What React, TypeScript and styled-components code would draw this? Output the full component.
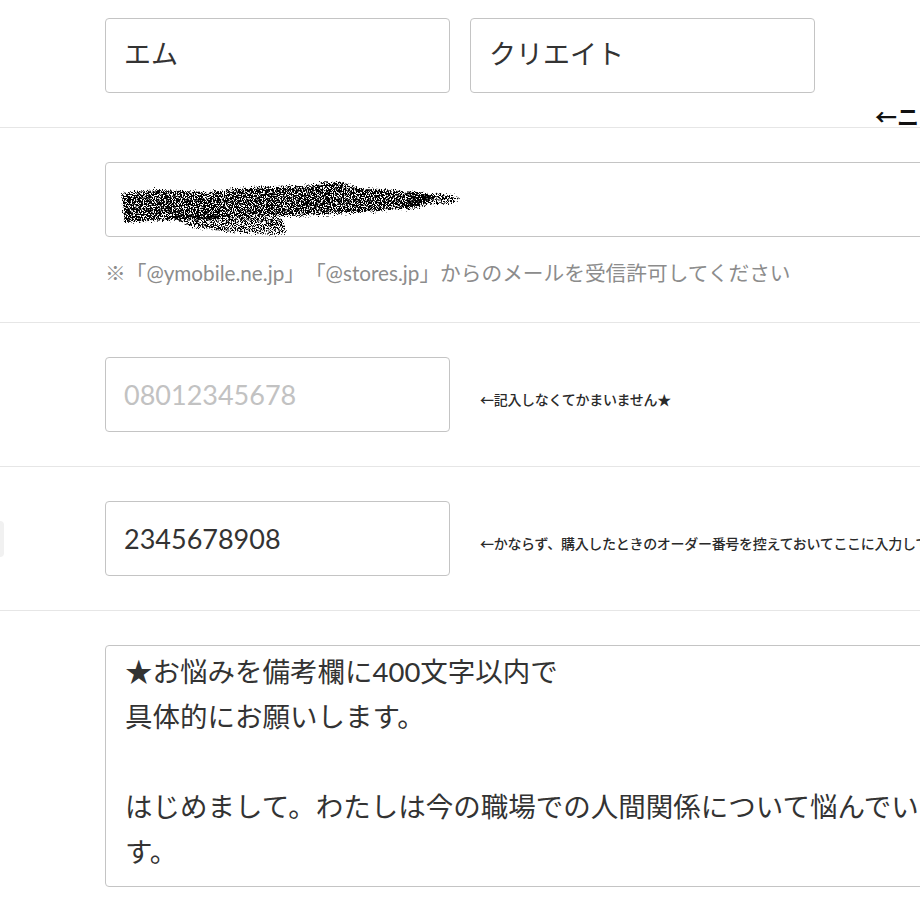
import styled, { createGlobalStyle } from "styled-components";

const GlobalStyle = createGlobalStyle`
  html, body {
    margin: 0;
    padding: 0;
    background: #fff;
    overflow: hidden;
  }
  body {
    font-family: Lato, "Noto Sans CJK JP", sans-serif;
    color: #333;
    text-spacing-trim: space-all;
  }
`

const Form = styled.div`
  width: 1500px;
  margin-top: -17px;
  margin-left: -296px;
`

const Row = styled.div`
  display: grid;
  grid-template-columns: 300px 1fr;
  border-top: 1px solid #e6e6e6;
  padding: 34px 0;
`

const LabelCell = styled.div`
  display: flex;
  justify-content: flex-end;
  align-items: center;
`

const Badge = styled.span`
  display: block;
  width: 44px;
  height: 36px;
  border-radius: 4px;
  background: #f1f1f1;
`

const Field = styled.div`
  padding-left: 101px;
`

const Inline = styled.div<{ $align?: string }>`
  display: flex;
  align-items: ${p => p.$align || "baseline"};
`

const NameGroup = styled.div`
  display: flex;
  gap: 20px;
`

const TextInput = styled.input<{ $kana?: boolean }>`
  box-sizing: border-box;
  width: 345px;
  height: 75px;
  padding: 0 18px ${p => (p.$kana ? "6px" : "0")};
  border: 1px solid #c4c4c4;
  border-radius: 4px;
  font-family: Lato, "Noto Sans CJK JP", sans-serif;
  font-size: 27px;
  color: #333;
  background: #fff;
  outline: none;

  &::placeholder {
    color: #c2c2c2;
  }
`

const EmailBox = styled.div`
  box-sizing: border-box;
  width: 1000px;
  height: 75px;
  padding: 18px 0 0 13px;
  border: 1px solid #c4c4c4;
  border-radius: 4px;
`

const Hint = styled.div`
  margin-top: 22px;
  line-height: 29px;
  font-size: 20.7px;
  color: #8c8c8c;
  white-space: nowrap;
`

const SideNote = styled.span`
  margin-left: 30px;
  font-family: "Noto Sans CJK JP", sans-serif;
  font-size: 14px;
  font-weight: 500;
  letter-spacing: -0.3px;
  color: #2a2a2a;
  white-space: nowrap;
`

const CornerNote = styled.span`
  margin-left: 60px;
  margin-bottom: -35px;
  line-height: 26px;
  font-family: "Noto Sans CJK JP", sans-serif;
  font-size: 22px;
  font-weight: 700;
  color: #111;
  white-space: nowrap;
`

const Memo = styled.textarea`
  box-sizing: border-box;
  display: block;
  width: 1000px;
  height: 242px;
  padding: 3px 19px;
  border: 1px solid #c4c4c4;
  border-radius: 4px;
  font-family: Lato, "Noto Sans CJK JP", sans-serif;
  font-size: 27.5px;
  line-height: 45px;
  color: #333;
  resize: none;
  outline: none;
  overflow: hidden;
`

// rough hand-drawn redaction over the address
function Scribble() {
    return (
        <svg width="345" height="56" viewBox="0 0 345 56">
            <defs>
                <filter id="dense" x="-5%" y="-20%" width="110%" height="140%">
                    <feTurbulence type="fractalNoise" baseFrequency="0.9" numOctaves="2" seed="3" result="noise"/>
                    <feDisplacementMap in="SourceGraphic" in2="noise" scale="9" result="rough"/>
                    <feColorMatrix in="noise" type="matrix"
                                   values="0 0 0 0 0  0 0 0 0 0  0 0 0 0 0  12 0 0 0 -4.8" result="mask"/>
                    <feComposite in="rough" in2="mask" operator="in"/>
                </filter>
                <filter id="sparse" x="-5%" y="-20%" width="110%" height="140%">
                    <feTurbulence type="fractalNoise" baseFrequency="1.1" numOctaves="2" seed="8" result="noise"/>
                    <feDisplacementMap in="SourceGraphic" in2="noise" scale="9" result="rough"/>
                    <feColorMatrix in="noise" type="matrix"
                                   values="0 0 0 0 0  0 0 0 0 0  0 0 0 0 0  13 0 0 0 -6" result="mask"/>
                    <feComposite in="rough" in2="mask" operator="in"/>
                </filter>
            </defs>
            <g filter="url(#dense)" fill="#000">
                <path d="M3 12 L40 9 L90 11 L130 7 L180 5 L215 3 L245 8 L300 11 L318 16 L300 26 L260 30 L200 34 L140 36 L80 38 L30 40 L5 41 Z"/>
            </g>
            <g filter="url(#sparse)" fill="#000">
                <path d="M290 12 L325 13 L340 16 L336 22 L300 24 L285 30 Z"/>
                <path d="M200 0 L222 1 L238 6 L205 7 Z"/>
                <path d="M50 34 L120 34 L165 38 L166 53 L120 52 L70 46 Z"/>
            </g>
        </svg>
    )
}

export default function App() {
    return (
        <>
            <GlobalStyle/>
            <Form>
                <Row>
                    <LabelCell/>
                    <Field>
                        <Inline $align="flex-end">
                            <NameGroup>
                                <TextInput $kana defaultValue="エム" readOnly/>
                                <TextInput $kana defaultValue="クリエイト" readOnly/>
                            </NameGroup>
                            <CornerNote>←ニックネームでも大丈夫です</CornerNote>
                        </Inline>
                    </Field>
                </Row>
                <Row>
                    <LabelCell/>
                    <Field>
                        <EmailBox>
                            <Scribble/>
                        </EmailBox>
                        <Hint>※「@ymobile.ne.jp」「@stores.jp」からのメールを受信許可してください</Hint>
                    </Field>
                </Row>
                <Row>
                    <LabelCell/>
                    <Field>
                        <Inline>
                            <TextInput placeholder="08012345678" readOnly/>
                            <SideNote>←記入しなくてかまいません★</SideNote>
                        </Inline>
                    </Field>
                </Row>
                <Row>
                    <LabelCell>
                        <Badge/>
                    </LabelCell>
                    <Field>
                        <Inline>
                            <TextInput defaultValue="2345678908" readOnly/>
                            <SideNote>←かならず、購入したときのオーダー番号を控えておいてここに入力してください</SideNote>
                        </Inline>
                    </Field>
                </Row>
                <Row>
                    <LabelCell/>
                    <Field>
                        <Memo
                            readOnly
                            wrap="off"
                            defaultValue={"★お悩みを備考欄に400文字以内で\n具体的にお願いします。\n\nはじめまして。わたしは今の職場での人間関係について悩んでいま\nす。"}
                        />
                    </Field>
                </Row>
            </Form>
        </>
    )
}
